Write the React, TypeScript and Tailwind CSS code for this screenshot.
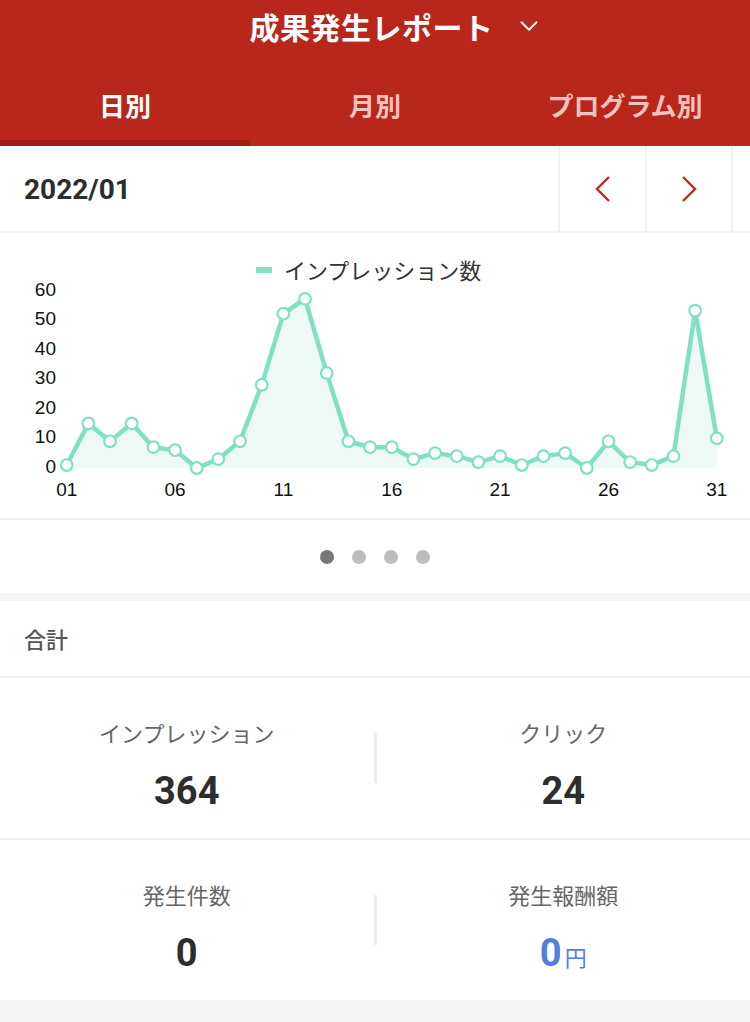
import { ChevronDown } from 'lucide-react';

const jp = { fontFamily: '"Noto Sans CJK JP", "Noto Sans", sans-serif' };
const num = { fontFamily: 'Roboto, "Liberation Sans", sans-serif' };

// daily impressions, 2022/01
const data = [1, 15, 9, 15, 7, 6, 0, 3, 9, 28, 52, 57, 32, 9, 7, 7, 3, 5, 4, 2, 4, 1, 4, 5, 0, 9, 2, 1, 4, 53, 10];

const px = (i: number) => 66.7 + i * 21.67;
const py = (v: number) => 235 - v * 2.967;

function Chart() {
  const pts = data.map((v, i) => `${px(i)},${py(v)}`).join(' ');
  const area = `M${px(0)},235 L${pts.split(' ').join(' L')} L${px(30)},235 Z`;
  const yTicks = [0, 10, 20, 30, 40, 50, 60];
  const xTicks = [0, 5, 10, 15, 20, 25, 30];

  return (
    <svg width="750" height="285" viewBox="0 0 750 285" className="block">
      <rect x="256" y="34" width="16" height="6" fill="#80e0c5" />
      <text x="284" y="36" fontSize="22" fill="#333" dominantBaseline="central" style={jp}>
        インプレッション数
      </text>

      {yTicks.map((t, i) => (
        <text
          key={t}
          x="56"
          y={233 - i * 29.5}
          fontSize="19"
          fill="#111"
          textAnchor="end"
          dominantBaseline="central"
          fontFamily="Liberation Sans, Arial, sans-serif"
        >
          {t}
        </text>
      ))}

      <path d={area} fill="#eef9f6" />
      <polyline points={pts} fill="none" stroke="#80e0c5" strokeWidth="4.5" strokeLinejoin="round" />
      {data.map((v, i) => (
        <circle key={i} cx={px(i)} cy={py(v)} r="5.8" fill="#fff" stroke="#80e0c5" strokeWidth="2.2" />
      ))}

      {xTicks.map((d) => (
        <text
          key={d}
          x={px(d)}
          y="256"
          fontSize="19"
          fill="#111"
          textAnchor="middle"
          dominantBaseline="central"
          fontFamily="Liberation Sans, Arial, sans-serif"
        >
          {String(d + 1).padStart(2, '0')}
        </text>
      ))}
    </svg>
  );
}

function Arrow({ dir }: { dir: 'left' | 'right' }) {
  return (
    <svg width="16" height="28" viewBox="0 0 16 28" fill="none" stroke="#c0281d" strokeWidth="2.4">
      <polyline points={dir === 'left' ? '14,2 2,14 14,26' : '2,2 14,14 2,26'} />
    </svg>
  );
}

function StatRow({ left, right }: { left: [string, string]; right: [string, string, boolean?] }) {
  const cell = (label: string, value: string, blue?: boolean) => (
    <div className="flex-1 flex flex-col items-center pt-[42px]">
      <span className="text-[22px] leading-[24px] text-[#666]" style={jp}>{label}</span>
      <div className="mt-[27px] flex items-baseline">
        <span className={`text-[38px] leading-[40px] font-bold ${blue ? 'text-[#4f80e1]' : 'text-[#2d2d2d]'}`} style={num}>
          {value}
        </span>
        {blue && <span className="ml-[3px] text-[22px] text-[#4f80e1]" style={jp}>円</span>}
      </div>
    </div>
  );
  return (
    <div className="h-[160px] flex items-stretch bg-white">
      {cell(left[0], left[1])}
      <div className="self-center w-[3px] h-[50px] bg-[#ededed]" />
      {cell(right[0], right[1], right[2])}
    </div>
  );
}

export default function App() {
  return (
    <div className="w-[750px] h-[1022px] bg-[#f4f4f4] overflow-hidden" style={jp}>
      {/* Header */}
      <header className="bg-[#b9261c] text-white">
        <div className="h-[52px] flex items-center justify-center pl-[43px]">
          <h1 className="text-[30px] font-bold leading-none tracking-[0.5px]">成果発生レポート</h1>
          <ChevronDown className="ml-[20px] w-[30px] h-[30px]" strokeWidth={1.5} />
        </div>
        <nav className="grid grid-cols-3 h-[94px]">
          <div className="flex items-center justify-center pt-[16px] border-b-[6px] border-[#9c1e17] text-[26px] font-bold">日別</div>
          <div className="flex items-center justify-center pt-[16px] border-b-[6px] border-transparent text-[26px] font-bold text-[#f0c3c0]">月別</div>
          <div className="flex items-center justify-center pt-[16px] border-b-[6px] border-transparent text-[26px] font-bold text-[#f0c3c0]">プログラム別</div>
        </nav>
      </header>

      {/* Month selector */}
      <div className="h-[87px] flex bg-white border-b-2 border-[#f2f2f2]">
        <div className="flex-1 flex items-center pl-[24px] pt-[3px]">
          <span className="text-[28px] font-bold text-[#2d2d2d]" style={num}>2022/01</span>
        </div>
        <button className="w-[87px] flex items-center justify-center border-l-2 border-[#f2f2f2]">
          <Arrow dir="left" />
        </button>
        <button className="w-[88px] flex items-center justify-center border-x-2 border-[#f2f2f2] mr-[17px]">
          <Arrow dir="right" />
        </button>
      </div>

      {/* Chart */}
      <div className="bg-white border-b-2 border-[#f2f2f2]">
        <Chart />
      </div>
      <div className="h-[73px] bg-white flex items-center justify-center gap-[18px]">
        <span className="w-[14px] h-[14px] rounded-full bg-[#777]" />
        <span className="w-[14px] h-[14px] rounded-full bg-[#bdbdbd]" />
        <span className="w-[14px] h-[14px] rounded-full bg-[#bdbdbd]" />
        <span className="w-[14px] h-[14px] rounded-full bg-[#bdbdbd]" />
      </div>

      {/* Totals */}
      <div className="mt-[8px] bg-white">
        <div className="h-[77px] flex items-center pl-[24px] border-b-2 border-[#f2f2f2]">
          <span className="text-[22px] font-medium text-[#555]">合計</span>
        </div>
        <div className="border-b-2 border-[#f2f2f2]">
          <StatRow left={['インプレッション', '364']} right={['クリック', '24']} />
        </div>
        <StatRow left={['発生件数', '0']} right={['発生報酬額', '0', true]} />
      </div>
    </div>
  );
}
